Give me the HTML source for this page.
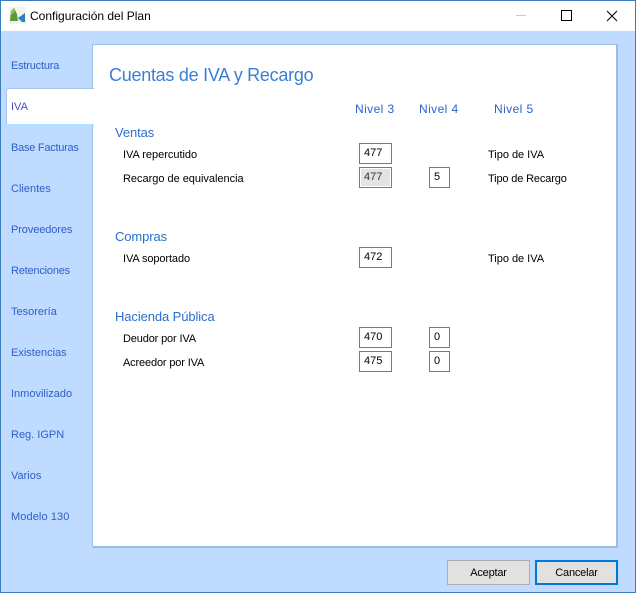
<!DOCTYPE html>
<html><head><meta charset="utf-8">
<style>
html,body{margin:0;padding:0}
body{width:636px;height:593px;position:relative;overflow:hidden;background:#bfdbff;font-family:"Liberation Sans",sans-serif}
div{position:absolute;box-sizing:border-box;white-space:nowrap}
.win{left:0;top:0;width:636px;height:593px;border:1px solid #3a7dbd}
.title{left:1px;top:1px;width:634px;height:30px;background:#fff}
.tab{left:11px;font-size:11px;color:#2f5fc8;line-height:14px}
.lab{font-size:11px;color:#000;line-height:14px;letter-spacing:-.02px}
.hd{font-size:12px;color:#2a62c8;line-height:15px;letter-spacing:.42px}
.sec{font-size:13px;color:#2a6fd0;line-height:16px;letter-spacing:-.1px}
.inp{background:#fff;border:1px solid #7a7a7a;font-size:11px;line-height:19px;padding-left:4px;color:#000;height:21px}
.btn{background:#e1e1e1;font-size:11px;color:#000;text-align:center;top:560px;height:25px;line-height:25px;letter-spacing:-.2px}
</style></head><body>
<div class="win"></div>
<div class="title"></div>
<svg style="position:absolute;left:9px;top:7px" width="17" height="17" viewBox="0 0 17 17">
<rect x="0" y="0" width="17" height="17" fill="#f1f3ef"/>
<path d="M1 14 L2 4 L5 1 L8 7 L9 14 Z" fill="#5d9a35"/>
<path d="M2 4 L5 1 L6 5 L2 8 Z" fill="#8cc152"/>
<path d="M9 11 L16 6 L16 15 L13 15 Z" fill="#2f7fc1"/>
</svg>
<div style="left:30px;top:8px;font-size:12px;line-height:16px;color:#000">Configuración del Plan</div>
<div style="left:516px;top:15px;width:10px;height:1px;background:#c8c8c8"></div>
<div style="left:561px;top:10px;width:11px;height:11px;border:1px solid #000"></div>
<svg style="position:absolute;left:606px;top:10px" width="12" height="12" viewBox="0 0 12 12"><path d="M1 1 L11 11 M11 1 L1 11" stroke="#000" stroke-width="1" fill="none"/></svg>

<div style="left:92px;top:44px;width:526px;height:504px;background:#fff;border-top:1px solid #9dbbe6;border-left:1px solid #9dbbe6;border-right:2px solid #9dbbe6;border-bottom:2px solid #9dbbe6;border-radius:2px"></div>
<div style="left:6px;top:88px;width:88px;height:38px;background:#fff;border:1px solid #a8c4ea;border-right:none;border-bottom:2px solid #a9e2ff;border-radius:3px 0 0 3px"></div>

<div class="tab" style="top:59px;letter-spacing:-.2px">Estructura</div>
<div class="tab" style="top:100px;color:#4a4fc0">IVA</div>
<div class="tab" style="top:141px;letter-spacing:-.25px">Base Facturas</div>
<div class="tab" style="top:182px">Clientes</div>
<div class="tab" style="top:223px;letter-spacing:-.1px">Proveedores</div>
<div class="tab" style="top:264px;letter-spacing:-.2px">Retenciones</div>
<div class="tab" style="top:305px">Tesorería</div>
<div class="tab" style="top:346px">Existencias</div>
<div class="tab" style="top:387px">Inmovilizado</div>
<div class="tab" style="top:428px">Reg. IGPN</div>
<div class="tab" style="top:469px">Varios</div>
<div class="tab" style="top:510px;letter-spacing:.1px">Modelo 130</div>

<div style="left:109px;top:64px;font-size:18px;line-height:22px;color:#3a7fd5;letter-spacing:-.27px">Cuentas de IVA y Recargo</div>

<div class="hd" style="left:355px;top:102px">Nivel 3</div>
<div class="hd" style="left:419px;top:102px">Nivel 4</div>
<div class="hd" style="left:494px;top:102px">Nivel 5</div>

<div class="sec" style="left:115px;top:125px">Ventas</div>
<div class="lab" style="left:123px;top:148px">IVA repercutido</div>
<div class="lab" style="left:123px;top:172px">Recargo de equivalencia</div>
<div class="inp" style="left:359px;top:143px;width:33px">477</div>
<div class="inp" style="left:359px;top:167px;width:33px;background:#e3e3e3;box-shadow:inset 0 0 0 1px #fff;color:#333">477</div>
<div class="inp" style="left:429px;top:167px;width:21px">5</div>
<div class="lab" style="left:488px;top:148px">Tipo de IVA</div>
<div class="lab" style="left:488px;top:172px;letter-spacing:-.15px">Tipo de Recargo</div>

<div class="sec" style="left:115px;top:229px">Compras</div>
<div class="lab" style="left:123px;top:252px;letter-spacing:-.1px">IVA soportado</div>
<div class="inp" style="left:359px;top:247px;width:33px">472</div>
<div class="lab" style="left:488px;top:252px">Tipo de IVA</div>

<div class="sec" style="left:115px;top:309px">Hacienda Pública</div>
<div class="lab" style="left:123px;top:332px;letter-spacing:-.15px">Deudor por IVA</div>
<div class="lab" style="left:123px;top:356px;letter-spacing:-.15px">Acreedor por IVA</div>
<div class="inp" style="left:359px;top:327px;width:33px">470</div>
<div class="inp" style="left:359px;top:351px;width:33px">475</div>
<div class="inp" style="left:429px;top:327px;width:21px">0</div>
<div class="inp" style="left:429px;top:351px;width:21px">0</div>

<div class="btn" style="left:447px;width:83px;border:1px solid #adadad">Aceptar</div>
<div class="btn" style="left:535px;width:83px;border:2px solid #0078d7;line-height:23px">Cancelar</div>
</body></html>
